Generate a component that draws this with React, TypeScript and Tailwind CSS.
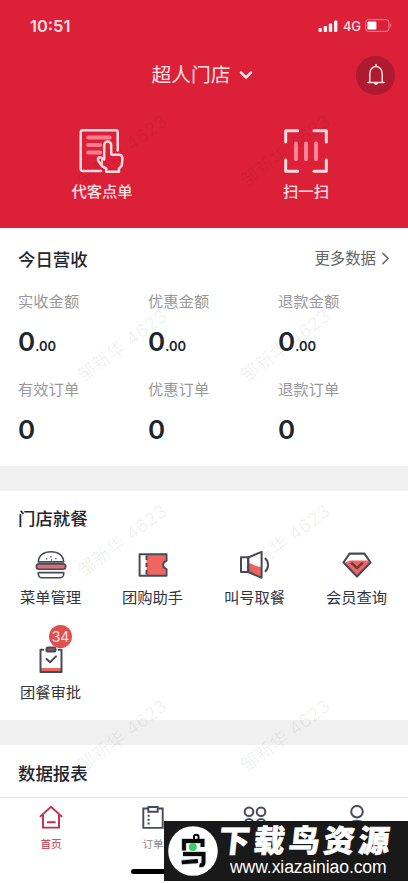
import type { ReactNode } from 'react';
import { ChevronDown, ChevronRight } from 'lucide-react';

const INK = '#454b58';
const CORAL = '#ef6660';

const metrics = [
  { label: '实收金额', value: '0', decimals: '.00' },
  { label: '优惠金额', value: '0', decimals: '.00' },
  { label: '退款金额', value: '0', decimals: '.00' },
  { label: '有效订单', value: '0' },
  { label: '优惠订单', value: '0' },
  { label: '退款订单', value: '0' },
];

function StatusBar() {
  return (
    <div className="flex h-[51px] items-center justify-between pl-[30px] pr-[16px] text-[#ffdfe4]">
      <span className="w-[43px] text-[16.5px] font-semibold leading-5">10:51</span>
      <div className="flex items-center gap-[5px]">
        <svg width="20" height="12" viewBox="0 0 20 12" fill="#fff0f2">
          <rect x="0.5" y="8" width="3.4" height="4" rx="1" />
          <rect x="5.7" y="6" width="3.4" height="6" rx="1" />
          <rect x="10.8" y="3.5" width="3.4" height="8.5" rx="1" />
          <rect x="16" y="0.5" width="3.4" height="11.5" rx="1" />
        </svg>
        <span className="w-[17px] text-[13px] font-medium leading-4 tracking-[-0.3px]">4G</span>
        <svg width="27" height="13" viewBox="0 0 27 13" fill="none">
          <rect x="0.6" y="0.6" width="23.4" height="11.8" rx="3" stroke="#f28696" strokeWidth="1" />
          <rect x="2.4" y="2.4" width="9" height="8.2" rx="1.2" fill="#fff" />
          <path d="M25.4 4.6c1.2.6 1.2 3.2 0 3.8z" fill="#f28696" />
        </svg>
      </div>
    </div>
  );
}

function BellIcon() {
  return (
    <svg width="18" height="24" viewBox="0 0 18 24" fill="none" stroke="#ffdce1" strokeWidth="1.5">
      <path d="M2.8 19.3V10.2a6.2 6.7 0 0 1 12.4 0v9.1M1 19.5h16M9 1.5v2" strokeLinecap="round" />
      <path d="M6.9 20h4.2a2.1 2.1 0 0 1-4.2 0z" fill="#ffdce1" stroke="none" />
    </svg>
  );
}

function OrderIcon() {
  return (
    <svg width="46" height="46" viewBox="0 0 46 46" fill="none" strokeLinecap="round" strokeLinejoin="round">
      <path d="M22 43H3.7a2 2 0 0 1-2-2V4.2a2 2 0 0 1 2-2h33a2 2 0 0 1 2 2V22.5" stroke="#ffdce1" strokeWidth="2.5" />
      <path d="M9.2 9.5h21.6M9.2 17h12M9.2 24.5h12" stroke="#ff7f91" strokeWidth="4" />
      <path
        d="M25.2 30V17a3.5 3.5 0 0 1 7 0v9.4l2.4.3h5.8c2.2.3 3 1.6 3 3.6l-.6 7.2-2.8 3v3.2H27.2v-3.4l-4.2-2.2-3.9-5.6c-.7-2.9 1.2-4 3.3-2.8l2.8 1.8"
        stroke="#ffdce1"
        strokeWidth="2.5"
      />
      <path d="M23 31v6.5" stroke="#ffdce1" strokeWidth="1.8" />
    </svg>
  );
}

function ScanIcon() {
  return (
    <svg width="46" height="46" viewBox="0 0 46 46" fill="none" strokeLinecap="round" strokeLinejoin="round">
      <path d="M2.7 14V2.7h12M31 2.7h12.3V14M2.7 32v11.3h12M31 43.3h12.3V32" stroke="#ffdce1" strokeWidth="3" />
      <path d="M13 15.5v15.8M23 15.5v15.8M33 15.5v15.8" stroke="#ff8495" strokeWidth="4" />
    </svg>
  );
}

function BurgerIcon() {
  return (
    <svg width="32" height="30" viewBox="0 0 32 30" fill="none" stroke={INK} strokeWidth="1.6" strokeLinejoin="round">
      <path d="M3.3 11.9C3.6 5.5 8.7 1.8 16 1.8s12.4 3.7 12.7 10.1z" fill="#fff" />
      <path d="M11 8.9h1.3M15.4 6.7h1.2M16 9.9h1.2M20.2 8.6h1.3" strokeWidth="1.4" />
      <rect x="1.3" y="13.9" width="29.4" height="5.4" rx="2.7" fill="#de6f70" />
      <path d="M3.3 22.6h25.4v1.5a3.7 3.7 0 0 1-3.7 3.7H7a3.7 3.7 0 0 1-3.7-3.7z" fill="#fff" />
    </svg>
  );
}

function TicketIcon() {
  return (
    <svg width="30" height="24" viewBox="0 0 30 24" fill="none" strokeLinejoin="round">
      <path d="M8.5 2h19.2v6.3a3.8 3.8 0 0 0 0 7.4V22H8.5z" fill={CORAL} />
      <path d="M1.6 1.3h26.9v6.6c-4.6 1.8-4.6 6.4 0 8.2v6.6H1.6z" stroke={INK} strokeWidth="2" />
      <path d="M8.5 2.5V7M8.5 10v4M8.5 17v4.5" stroke={INK} strokeWidth="2" />
    </svg>
  );
}

function SpeakerIcon() {
  return (
    <svg width="32" height="30" viewBox="0 0 32 30" fill="none" stroke={INK} strokeWidth="2" strokeLinejoin="round">
      <path d="M10 13.6c4 .1 7.3 3.5 12 3.2v10.4L10 22z" fill={CORAL} stroke="none" />
      <path d="M2 7.3h7.2v14.8H2z" />
      <path d="M9.2 7.5 22.6 1.8v26L9.2 22z" />
      <path d="M26 8c4 3.8 4 10 0 13.8" />
    </svg>
  );
}

function DiamondIcon() {
  return (
    <svg width="30" height="26" viewBox="0 0 30 26" fill="none" strokeLinejoin="round">
      <path d="M3 10.8 8 8.6h17.6l1.9 2L15 24.3z" fill={CORAL} />
      <path d="M7.5 1.6h15l6 8.9L15 24.6 1.5 10.5z" stroke={INK} strokeWidth="2.1" />
      <path d="m9.2 10.6 5.8 5.5 5.8-5.5" stroke="#733940" strokeWidth="2.6" />
    </svg>
  );
}

function ApprovalIcon() {
  return (
    <svg width="26" height="28" viewBox="0 0 26 28" fill="none" strokeLinecap="round" strokeLinejoin="round">
      <path d="M2.5 22h21v4h-21z" fill={CORAL} />
      <path d="M5.2 3.7H2.5V26h21V3.7h-2.7" stroke={INK} strokeWidth="2" />
      <rect x="8.5" y="1.6" width="9" height="4" rx="1.6" fill="#99595f" stroke={INK} strokeWidth="2" />
      <path d="m8.5 13 3.6 3.2L18 10.4" stroke={INK} strokeWidth="2" />
    </svg>
  );
}

function SectionTitle({ children }: { children: ReactNode }) {
  return <h2 className="text-[17.4px] font-medium leading-6 text-[#1d2530]">{children}</h2>;
}

function FeatureItem({ icon, label, badge }: { icon: ReactNode; label: string; badge?: string }) {
  return (
    <div className="flex flex-col items-center">
      <div className="relative flex h-[30px] items-center justify-center">
        {icon}
        {badge && (
          <span className="absolute -top-[20px] left-[11px] flex h-[23px] w-[23px] items-center justify-center rounded-full bg-[#e24f4f] font-['Inter',sans-serif] text-[14px] leading-none text-[#ffe3e2]">
            {badge}
          </span>
        )}
      </div>
      <span className="mr-px mt-[7px] text-[15.3px] leading-[22px] text-[#31363f]">{label}</span>
    </div>
  );
}

function TabItem({ icon, label, active }: { icon: ReactNode; label: string; active?: boolean }) {
  return (
    <div className={`flex flex-col items-center pt-[7px] text-[10.6px] ${active ? 'text-[#c52f48]' : 'text-[#8c8c8c]'}`}>
      <div className="flex h-6 items-center">{icon}</div>
      <span className="mt-[8px] leading-4">{label}</span>
    </div>
  );
}

function HomeIcon() {
  return (
    <svg width="24" height="24" viewBox="0 0 24 24" fill="none" stroke="#be304a" strokeWidth="1.9">
      <path d="M.9 11.9 12 1.7l11.1 10.2M4 10v12.6h16V10M8 17.3h8.6" />
    </svg>
  );
}

function OrdersTabIcon() {
  return (
    <svg width="22" height="24" viewBox="0 0 22 24" fill="none" stroke={INK} strokeWidth="1.9">
      <path d="M6 3.5H1.3v19.4h19.4V3.5H16" />
      <path d="M6.3 2h9.4v4.8H6.3z" />
      <path d="M5.6 10.8h2M5.6 14.7h2M5.6 18.5h2" />
    </svg>
  );
}

function AppsTabIcon() {
  return (
    <svg width="24" height="24" viewBox="0 0 24 24" fill="none" stroke={INK} strokeWidth="2">
      <circle cx="6" cy="6.7" r="4.3" />
      <circle cx="18" cy="6.7" r="4.3" />
      <circle cx="6" cy="18.3" r="4.3" />
      <circle cx="18" cy="18.3" r="4.3" />
    </svg>
  );
}

function ProfileTabIcon() {
  return (
    <svg width="24" height="24" viewBox="0 0 24 24" fill="none" stroke={INK} strokeWidth="2">
      <circle cx="12" cy="6.7" r="5.8" />
      <path d="M2 25c0-5.8 4-9.2 10-9.2S22 19.2 22 25" />
    </svg>
  );
}

function Watermarks() {
  return (
    <div className="pointer-events-none absolute inset-0 grid grid-cols-[163px_163px] auto-rows-[195px] pl-[41px] pt-[53px]">
      {Array.from({ length: 8 }, (_, i) => (
        <div key={i} className="flex items-center justify-center">
          <span className="-rotate-[37deg] whitespace-nowrap text-[18px] tracking-[0.3px] text-black/[0.065]">
            邹新华 4623
          </span>
        </div>
      ))}
    </div>
  );
}

function SiteBanner() {
  return (
    <div className="absolute bottom-[2px] right-0 flex h-[60px] w-[244px] items-center bg-[#191919] pl-[4px] text-white">
      <svg className="shrink-0" width="50" height="50" viewBox="0 0 50 50" fill="none">
        <circle cx="25" cy="25" r="24.8" fill="#fff" />
        <path d="M16 24.5V15h18.5v6M15 28h20.5v8.5q0 3.5-4 2.5M13.7 36.3 30 35" stroke="#c3c8c5" strokeWidth="5.5" />
        <path d="M16 24.5V15h18.5v6M15 28h20.5v8.5q0 3.5-4 2.5M13.7 36.3 30 35" stroke="#080808" strokeWidth="3.8" />
        <path d="M26 14v-3.5c0-2.5 4.5-2.5 4.5 0V14" stroke="#080808" strokeWidth="2" />
        <circle cx="24.8" cy="21" r="4" fill="#38cf68" />
      </svg>
      <div className="flex flex-col pl-[1px]">
        <span className="w-[178px] whitespace-nowrap text-[31px] font-black leading-[30px] tracking-[3.9px] [-webkit-text-stroke:0.6px_white]">
          <span className="inline-block -skew-x-6">下载鸟资源</span>
        </span>
        <span className="ml-[11px] mt-[1px] w-[160px] whitespace-nowrap font-['Liberation_Sans',sans-serif] text-[17.6px] leading-[20px] tracking-[-0.1px]">
          www.xiazainiao.com
        </span>
      </div>
    </div>
  );
}

export default function App() {
  return (
    <div className="relative flex h-[883px] w-[408px] flex-col overflow-hidden bg-white font-['Inter','Noto_Sans_CJK_SC',sans-serif]">
      <header className="h-[228px] shrink-0 bg-[#dc2038]">
        <StatusBar />
        <div className="grid h-[48px] grid-cols-[1fr_auto_1fr] items-center pr-[13px]">
          <span />
          <button className="ml-[12px] flex items-center gap-[6px] text-[19.8px] leading-7 text-[#ffe2e6]">
            超人门店
            <ChevronDown className="-ml-[1px] h-[20px] w-[20px]" strokeWidth={3} />
          </button>
          <button className="flex h-[39px] w-[39px] items-center justify-center justify-self-end rounded-full bg-[#ae1a2f]">
            <BellIcon />
          </button>
        </div>
        <div className="grid grid-cols-2 pt-[29px] text-[15.3px] font-medium leading-[22px] text-[#ffe2e6]">
          <button className="flex flex-col items-center gap-[7px]">
            <OrderIcon />
            代客点单
          </button>
          <button className="flex flex-col items-center gap-[7px]">
            <ScanIcon />
            扫一扫
          </button>
        </div>
      </header>

      <section className="h-[238px] shrink-0 px-[18px] pt-[20px]">
        <div className="flex items-center justify-between">
          <SectionTitle>今日营收</SectionTitle>
          <button className="-mr-[6px] -mt-[3px] flex items-center text-[15.4px] leading-6 text-[#666]">
            更多数据
            <ChevronRight className="-ml-[1px] h-[21px] w-[21px]" strokeWidth={1.8} />
          </button>
        </div>
        <div className="grid grid-cols-[130px_130px_1fr] pt-[19px]">
          {metrics.map((m) => (
            <div key={m.label} className="h-[88px]">
              <p className="text-[15.3px] leading-[22px] text-[#999]">{m.label}</p>
              <p className="mt-[13px] text-[26px] font-semibold leading-[32px] text-[#20262d]">
                {m.value}
                {m.decimals && <span className="text-[13px]">{m.decimals}</span>}
              </p>
            </div>
          ))}
        </div>
      </section>

      <div className="h-[25px] shrink-0 bg-[#f0f0f0]" />

      <section className="h-[229px] shrink-0 pt-[16px]">
        <div className="px-[18px]">
          <SectionTitle>门店就餐</SectionTitle>
        </div>
        <div className="grid grid-cols-4 gap-y-[36px] pt-[19px]">
          <FeatureItem icon={<BurgerIcon />} label="菜单管理" />
          <FeatureItem icon={<TicketIcon />} label="团购助手" />
          <FeatureItem icon={<SpeakerIcon />} label="叫号取餐" />
          <FeatureItem icon={<DiamondIcon />} label="会员查询" />
          <FeatureItem icon={<ApprovalIcon />} label="团餐审批" badge="34" />
        </div>
      </section>

      <div className="h-[25px] shrink-0 bg-[#f0f0f0]" />

      <section className="h-[52px] shrink-0 px-[18px] pt-[17px]">
        <SectionTitle>数据报表</SectionTitle>
      </section>

      <Watermarks />

      <nav className="relative flex-1 border-t border-[#e4e4e4] bg-white">
        <div className="grid grid-cols-4">
          <TabItem icon={<HomeIcon />} label="首页" active />
          <TabItem icon={<OrdersTabIcon />} label="订单" />
          <TabItem icon={<AppsTabIcon />} label="应用" />
          <TabItem icon={<ProfileTabIcon />} label="我的" />
        </div>
        <div className="mx-auto mt-[16px] h-[5px] w-[146px] rounded-full bg-black" />
      </nav>

      <SiteBanner />
    </div>
  );
}
